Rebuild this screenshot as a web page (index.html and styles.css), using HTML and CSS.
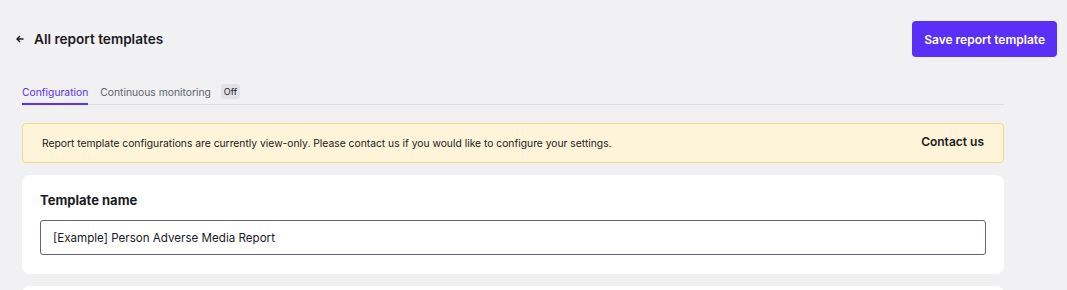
FILE: index.html
```html
<!DOCTYPE html>
<html lang="en">
<head>
  <meta charset="UTF-8" />
  <title>Report template</title>
  <link rel="stylesheet" href="styles.css">
</head>
<body>
  <div class="page">
    <header class="top">
      <a class="back" href="#">
        <svg width="8" height="8" viewBox="0 0 8 8"><path d="M7.5 4H1M4 1L1 4l3 3" fill="none" stroke="#1b1b24" stroke-width="1.4"/></svg>
        <span>All report templates</span>
      </a>
      <button class="save-btn">Save report template</button>
    </header>

    <main class="content">
      <nav class="tabs">
        <a class="tab active" href="#">Configuration</a>
        <a class="tab" href="#">Continuous monitoring <span class="badge">Off</span></a>
      </nav>

      <div class="notice">
        <span>Report template configurations are currently view-only. Please contact us if you would like to configure your settings.</span>
        <a class="notice-link" href="#">Contact us</a>
      </div>

      <section class="card">
        <label class="field-label" for="tplName">Template name</label>
        <input class="field" id="tplName" type="text" value="[Example] Person Adverse Media Report" />
      </section>

      <section class="card card-next"></section>
    </main>
  </div>
</body>
</html>
```

FILE: styles.css
```css
:root {
  --bg: #f1f1f3;
  --purple: #5a2ff8;
  --text: #1b1b24;
  --muted: #5f5f6c;
}

* { box-sizing: border-box; }

body {
  margin: 0;
  background: var(--bg);
  font-family: 'Inter', 'Noto Sans', sans-serif;
  color: var(--text);
  overflow: hidden;
}

.page {
  padding: 21px 10px 0 16px;
}

.top {
  display: flex;
  justify-content: space-between;
  align-items: center;
  height: 36px;
}

.back {
  display: flex;
  align-items: center;
  gap: 10px;
  text-decoration: none;
  color: var(--text);
  font-size: 13.6px;
  font-weight: 600;
}

.save-btn {
  height: 36px;
  padding: 0 12px;
  background: var(--purple);
  border: none;
  border-radius: 4px;
  color: white;
  font-family: inherit;
  font-size: 12px;
  font-weight: 600;
  cursor: pointer;
}

.content {
  width: 982px;
  margin-left: 6px;
}

.tabs {
  display: flex;
  gap: 12px;
  margin-top: 26px;
  border-bottom: 1px solid #dcdce2;
  height: 22px;
}

.tab {
  font-size: 10.3px;
  color: var(--muted);
  text-decoration: none;
  display: flex;
  align-items: flex-start;
  height: 22px;
  padding-top: 3px;
}

.tab.active {
  color: var(--purple);
  border-bottom: 2px solid var(--purple);
}

.tab .badge {
  margin-left: 10px;
}

.badge {
  margin-top: -2px;
  padding: 2px 3px;
  background: #e2e2e6;
  border-radius: 3px;
  font-size: 9px;
  color: var(--text);
  height: 15px;
}

.notice {
  display: flex;
  justify-content: space-between;
  align-items: center;
  margin-top: 18px;
  height: 40px;
  padding: 0 19px;
  background: #fef4d9;
  border: 1px solid #f6d88a;
  border-radius: 4px;
  font-size: 10.3px;
}

.notice-link {
  color: var(--text);
  text-decoration: none;
  font-size: 12px;
  font-weight: 600;
  margin-top: -3px;
}

.card {
  background: white;
  border-radius: 8px;
  margin-top: 12px;
  padding: 17px 18px 19px;
}

.field-label {
  display: block;
  font-size: 13px;
  font-weight: 700;
  margin-bottom: 12px;
}

.field {
  width: 100%;
  height: 35px;
  padding: 0 12px;
  border: 1px solid #656575;
  border-radius: 3px;
  font-family: inherit;
  font-size: 11.6px;
  color: var(--text);
}

.card-next {
  height: 40px;
}
```
